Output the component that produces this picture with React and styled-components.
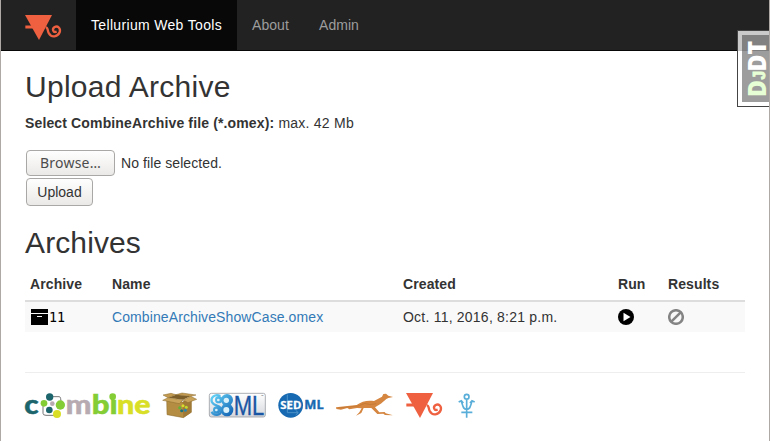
import React from "react";
import styled, { createGlobalStyle } from "styled-components";

const GlobalStyle = createGlobalStyle`
  * { box-sizing: border-box; }
  body {
    margin: 0;
    background: #fff;
    color: #333;
    font: 14px/20px "Liberation Sans", Arial, sans-serif;
  }
`;

const Page = styled.div`
  position: relative;
  height: 441px;
  overflow: hidden;
  border-left: 1px solid #aea9a4;
  border-right: 1px solid #aea9a4;
`;

const Navbar = styled.nav`
  display: flex;
  height: 51px;
  padding-left: 24px;
  background: #222;
  border-bottom: 1px solid #080808;
`;

const Brand = styled.a`
  width: 51px;
  padding-top: 14px;
`;

const NavItem = styled.a`
  padding: 15px;
  color: ${(p) => (p.$active ? "#fff" : "#9d9d9d")};
  background: ${(p) => (p.$active ? "#080808" : "transparent")};
  width: ${(p) => p.$width}px;
  letter-spacing: ${(p) => (p.$active ? 0.33 : 0.05)}px;
  white-space: nowrap;
`;

const Content = styled.main`
  display: flex;
  flex-direction: column;
  align-items: flex-start;
  padding: 19px 24px 0;
`;

const Heading = styled.h2`
  margin: 0 0 10px;
  font-size: 30px;
  font-weight: 400;
  line-height: 33px;
  letter-spacing: ${(p) => p.$tracking}px;
`;

const Hint = styled.p`
  margin: 0 0 17px;
  letter-spacing: 0.14px;
`;

const Limit = styled.span`
  letter-spacing: 0.24px;
`;

const FileRow = styled.div`
  display: flex;
  align-items: center;
  gap: 6px;
  height: 26px;
  margin: 0 0 2px 1px;
  letter-spacing: 0.08px;
`;

const Button = styled.button`
  width: ${(p) => p.$width}px;
  height: ${(p) => p.$height}px;
  margin: 0;
  padding: 0;
  border: 1px solid #a9a8a6;
  border-radius: 4px;
  background: linear-gradient(#fefefe, #f5f4f3 50%, #ebe9e7);
  color: ${(p) => (p.$system ? "#4c4c4c" : "#333")};
  font-family: ${(p) => (p.$system ? '"Noto Sans"' : '"Liberation Sans"')}, sans-serif;
  font-size: 14px;
  line-height: 20px;
  letter-spacing: ${(p) => (p.$system ? 0.2 : 0)}px;
`;

const UploadButton = styled(Button)`
  margin: 0 0 20px 1px;
`;

const Table = styled.div`
  width: 720px;
  margin-top: -1px;
`;

const Row = styled.div`
  display: grid;
  grid-template-columns: 82px 291px 215px 50px 82px;
  align-items: center;
  height: 30px;
  background: #f9f9f9;
`;

const HeaderRow = styled(Row)`
  height: 34px;
  background: #fff;
  border-bottom: 2px solid #ddd;
  font-weight: 700;
`;

const Cell = styled.div`
  display: flex;
  align-items: center;
  padding-left: 5px;
  letter-spacing: ${(p) => p.$tracking || 0.1}px;
  white-space: nowrap;
`;

const Link = styled.a`
  color: #337ab7;
`;

const ArchiveId = styled.span`
  padding-top: 1px;
  color: #000;
  font: 13.33px/20px "DejaVu Sans Mono", monospace;
`;

const Footer = styled.footer`
  display: flex;
  align-items: flex-start;
  width: 720px;
  height: 60px;
  margin-top: 40px;
  padding-top: 7px;
  border-top: 1px solid #eee;
`;

const Logo = styled.svg`
  display: block;
  flex: none;
  overflow: visible;
  margin-left: ${(p) => p.$gap || 0}px;
`;

const DebugHandle = styled.aside`
  position: absolute;
  top: 30px;
  right: 0;
  width: 32px;
  height: 77px;
  border: 1px solid #444;
  border-right: 0;
  background: rgba(255, 255, 255, 0.76);
`;

const DebugLabel = styled.div`
  position: absolute;
  top: 4px;
  left: 4px;
  width: 27px;
  height: 67px;
  background: rgba(50, 50, 50, 0.48);
`;

function TelluriumMark() {
  return (
    <>
      <path d="M0 0H81L42 75Z" fill="#ee6040" />
      <path d="M1 36H25" stroke="#ee6040" strokeWidth="9" />
      <path
        d="M62 37C70 37 67 47 71 54C79 69 98 66 104 52C108 40 98 31 89 36C80 42 84 54 95 50"
        fill="none"
        stroke="#ee6040"
        strokeWidth="7"
      />
    </>
  );
}

function CombineLogo() {
  return (
    <Logo width="126" height="44" viewBox="45 0 378 132">
      <g fontFamily="Lato, sans-serif" fontSize="82" fontWeight="900" strokeWidth="1.5">
        <text x="43" y="102" fill="#1c656c" stroke="#1c656c" textLength="43" lengthAdjust="spacingAndGlyphs">c</text>
        <text x="167" y="102" fill="#b7abb1" stroke="#b7abb1" textLength="77" lengthAdjust="spacingAndGlyphs">m</text>
        <text x="245" y="102" fill="#84cd35" stroke="#84cd35" textLength="78" lengthAdjust="spacingAndGlyphs">bı</text>
        <text x="321" y="102" fill="#d9df26" stroke="#d9df26" textLength="101" lengthAdjust="spacingAndGlyphs">ne</text>
      </g>
      <path d="M119 50H148Q153 50 153 70M99 70V100Q99 106 108 106H140" fill="none" stroke="#777" strokeWidth="3" />
      <circle cx="119" cy="51" r="11" fill="#1c656c" />
      <circle cx="102" cy="70" r="10" fill="#84cd35" />
      <circle cx="127" cy="71" r="7" fill="#b7abb1" />
      <circle cx="151" cy="75" r="14" fill="#84cd35" />
      <circle cx="118" cy="90" r="10" fill="#1c656c" />
      <circle cx="141" cy="102" r="12" fill="#d9df26" />
      <circle cx="308" cy="50" r="10" fill="#84cd35" />
    </Logo>
  );
}

function BoxLogo() {
  return (
    <Logo $gap={11} width="36" height="44" viewBox="20 0 108 132">
      <path d="M34 58L82 66L108 54V97L84 113L35 104Z" fill="#b48c42" stroke="#8a6a2c" strokeWidth="1.5" />
      <path d="M82 66L108 54V97L84 113Z" fill="#a07936" />
      <path d="M38 53L62 44L106 48L83 59Z" fill="#7b5e2a" />
      <path d="M38 53L83 60L72 71L22 61ZM83 60L106 49L124 58L98 68Z" fill="#c9a35a" stroke="#8a6a2c" strokeWidth="1.5" />
      <path d="M38 53L23 45L47 40L62 44ZM62 44L80 39L122 45L106 49Z" fill="#c39a50" stroke="#8a6a2c" strokeWidth="1.5" />
      <circle cx="83" cy="77" r="4.5" fill="#d8dc2b" />
      <circle cx="93" cy="82" r="4.5" fill="#c0d82f" />
      <circle cx="73" cy="83" r="4.5" fill="#5fb534" />
      <circle cx="90" cy="91" r="4.5" fill="#2a86ad" />
      <circle cx="79" cy="92" r="4.5" fill="#1b727a" />
    </Logo>
  );
}

function SbmlLogo() {
  return (
    <Logo $gap={11} width="57" height="44" viewBox="162 0 171 132">
      <defs>
        <linearGradient id="plate" x2="0" y2="1"><stop stopColor="#fff" /><stop offset="1" stopColor="#d5d7dc" /></linearGradient>
        <linearGradient id="sbml" gradientUnits="userSpaceOnUse" x1="175" y1="45" x2="230" y2="105"><stop stopColor="#62d0f6" /><stop offset="1" stopColor="#1464b4" /></linearGradient>
      </defs>
      <rect x="163" y="40" width="168" height="71" rx="6" fill="url(#plate)" stroke="#9ba0a6" strokeWidth="2.5" />
      <path d="M196 48C180 40 165 53 171 67C177 80 200 74 199 91C197 108 176 108 170 95" fill="none" stroke="url(#sbml)" strokeWidth="7" />
      <g fill="url(#sbml)">
        <circle cx="216" cy="60" r="18" />
        <circle cx="216" cy="90" r="19" />
        <circle cx="191" cy="59" r="11" />
        <circle cx="185" cy="90" r="11" />
      </g>
      <g fill="#d9f1fb">
        <circle cx="214" cy="61" r="8" />
        <circle cx="214" cy="90" r="9" />
        <circle cx="190" cy="60" r="4" />
        <circle cx="184" cy="90" r="4" />
      </g>
      <text x="236" y="106" fill="#1a55a3" stroke="#1a55a3" strokeWidth="1" fontFamily="Liberation Sans" fontSize="82" textLength="92" lengthAdjust="spacingAndGlyphs">ML</text>
      <text x="317" y="51" fill="#444" fontFamily="Liberation Sans" fontSize="9">™</text>
    </Logo>
  );
}

function SedmlLogo() {
  return (
    <Logo $gap={12} width="46" height="44" viewBox="23 0 138 132">
      <circle cx="61" cy="76" r="37" fill="#1769b1" />
      <path d="M51 44V98H83M76 91L84 98L76 105" fill="none" stroke="#4c92c8" strokeWidth="3" />
      <text x="30" y="86" fill="#fff" stroke="#fff" strokeWidth="0.8" fontFamily="Open Sans" fontWeight="700" fontSize="32" textLength="63" lengthAdjust="spacingAndGlyphs">SED</text>
      <text x="102" y="88" fill="#1769b1" stroke="#1769b1" strokeWidth="1" fontFamily="Open Sans" fontWeight="700" fontSize="35" textLength="58" lengthAdjust="spacingAndGlyphs">ML</text>
    </Logo>
  );
}

function RoadrunnerLogo() {
  return (
    <Logo $gap={11} width="60" height="44" viewBox="195 0 180 132">
      <path d="M198 82L260 75C275 64 292 60 312 63L336 50L340 42L348 41L355 47L369 51L355 54C347 56 339 68 325 76L315 82L328 97L344 96L347 100L369 106L345 105L340 101L322 102L304 84L281 84L274 99L258 107L268 97L275 85L261 84L238 88L232 84L213 89L199 87Z" fill="#d58640" />
      <path d="M205 84L264 78L285 70L300 74L319 71" fill="none" stroke="#c07531" strokeWidth="2" />
    </Logo>
  );
}

function TridentLogo() {
  return (
    <Logo $gap={15} width="18" height="44" viewBox="192 0 54 132">
      <g fill="none" stroke="#58aed8" strokeWidth="5">
        <circle cx="218" cy="50" r="7" />
        <path d="M218 58V113M202 97H235M202 64C207 78 207 88 218 88C229 88 229 78 234 64M194 66L202 62L208 69M228 69L234 62L242 66" />
      </g>
    </Logo>
  );
}

function Handle() {
  return (
    <DebugHandle>
      <DebugLabel>
        <Logo width="27" height="67" viewBox="0 0 27 67">
          <g transform="translate(24 60) rotate(-90)" fontFamily="Open Sans" fontWeight="800">
            <text x="-2" y="0" fontSize="25" fill="#e7ffd5" textLength="17" lengthAdjust="spacingAndGlyphs">D</text>
            <text x="15.5" y="-1" fontSize="16" fill="#e7ffd5" stroke="#e7ffd5" fontFamily="Liberation Sans" textLength="8.5" lengthAdjust="spacingAndGlyphs">J</text>
            <text x="23.5" y="0" fontSize="25" fill="#fff" textLength="30.5" lengthAdjust="spacingAndGlyphs">DT</text>
          </g>
        </Logo>
      </DebugLabel>
    </DebugHandle>
  );
}

export default function App() {
  return (
    <>
      <GlobalStyle />
      <Page>
        <Navbar>
          <Brand>
            <Logo width="37" height="27" viewBox="0 -3 111 81"><TelluriumMark /></Logo>
          </Brand>
          <NavItem $active $width={161}>Tellurium Web Tools</NavItem>
          <NavItem $width={67}>About</NavItem>
          <NavItem $width={70}>Admin</NavItem>
        </Navbar>
        <Content>
          <Heading $tracking={0.28}>Upload Archive</Heading>
          <Hint><b>Select CombineArchive file (*.omex):</b> <Limit>max. 42 Mb</Limit></Hint>
          <FileRow>
            <Button $system $width={89} $height={26}>Browse…</Button>
            <span>No file selected.</span>
          </FileRow>
          <UploadButton $width={67} $height={28}>Upload</UploadButton>
          <Heading $tracking={0.12}>Archives</Heading>
          <Table>
            <HeaderRow>
              <Cell>Archive</Cell><Cell>Name</Cell><Cell>Created</Cell><Cell>Run</Cell><Cell>Results</Cell>
            </HeaderRow>
            <Row>
              <Cell>
                <svg width="19" height="18" viewBox="0 0 19 18">
                  <path d="M1 1H18V5H1ZM1 6H18V17H1ZM7 8V9H12V8Z" fillRule="evenodd" />
                </svg>
                <ArchiveId>11</ArchiveId>
              </Cell>
              <Cell><Link>CombineArchiveShowCase.omex</Link></Cell>
              <Cell $tracking={0.22}>Oct. 11, 2016, 8:21 p.m.</Cell>
              <Cell>
                <svg width="16" height="16" viewBox="0 0 16 16"><circle cx="8" cy="8" r="8" /><path d="M5.5 3.7L12.5 8L5.5 12.3Z" fill="#fff" /></svg>
              </Cell>
              <Cell>
                <svg width="16" height="16" viewBox="0 0 16 16" fill="none" stroke="#848484" strokeWidth="2.5"><circle cx="8" cy="8" r="6.8" /><path d="M3.3 12.7L12.7 3.3" /></svg>
              </Cell>
            </Row>
          </Table>
          <Footer>
            <CombineLogo />
            <BoxLogo />
            <SbmlLogo />
            <SedmlLogo />
            <RoadrunnerLogo />
            <Logo $gap={11} width="37" height="44" viewBox="0 -39 111 132"><TelluriumMark /></Logo>
            <TridentLogo />
          </Footer>
        </Content>
        <Handle />
      </Page>
    </>
  );
}
